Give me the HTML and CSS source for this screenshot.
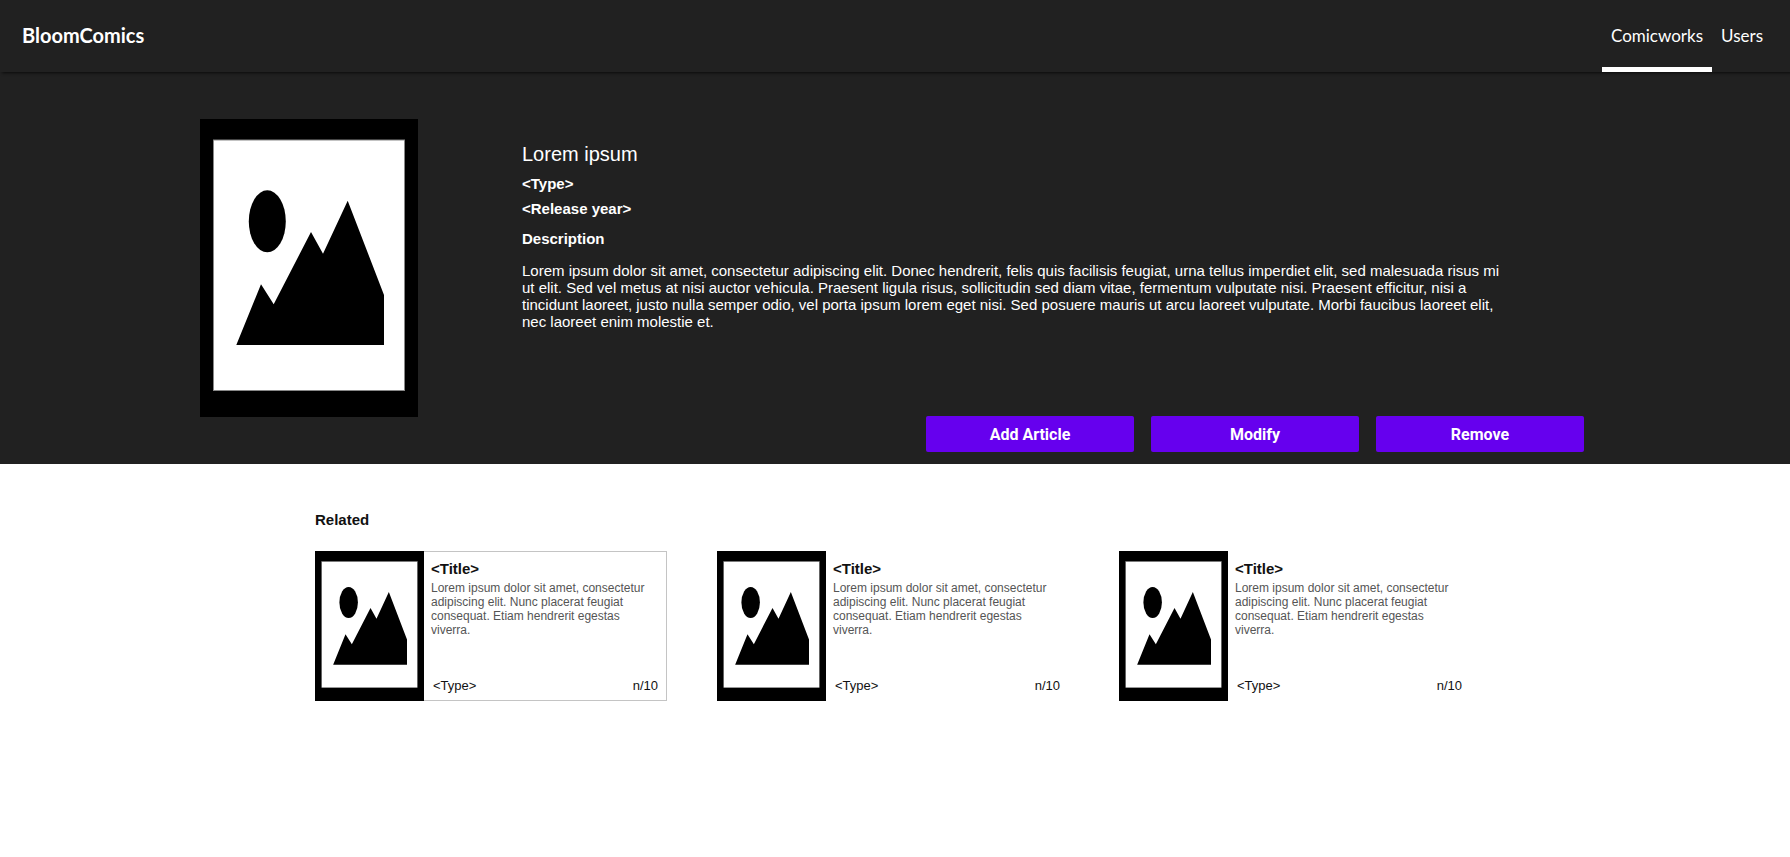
FILE: index.html
```html
<!DOCTYPE html>
<html lang="en">
<head>
<meta charset="utf-8">
<meta name="viewport" content="width=device-width, initial-scale=1">
<title>BloomComics</title>
<link rel="stylesheet" href="styles.css">
</head>
<body>
<svg class="defs" aria-hidden="true">
  <symbol id="cover" viewBox="0 0 218 298" preserveAspectRatio="none">
    <rect width="218" height="298" fill="#000"/>
    <rect x="13.5" y="21" width="191" height="250.5" fill="#fff" stroke="#888" stroke-width="1"/>
    <ellipse cx="67.3" cy="102.3" rx="18.5" ry="31"/>
    <path d="M36.3 226 61 165.3 73.7 185.3 111 113 123 134.7 147.7 81.7 184 176V226Z"/>
  </symbol>
</svg>

<header class="topbar">
  <a class="brand" href="#">BloomComics</a>
  <nav class="nav">
    <a class="nav-link active" href="#">Comicworks</a>
    <a class="nav-link" href="#">Users</a>
  </nav>
</header>

<main>
  <section class="hero">
    <svg class="hero-cover" role="img" aria-label="Cover"><use href="#cover"/></svg>
    <div class="info">
      <h1 class="title">Lorem ipsum</h1>
      <p class="meta">&lt;Type&gt;</p>
      <p class="meta">&lt;Release year&gt;</p>
      <h2 class="subtitle">Description</h2>
      <p class="description">Lorem ipsum dolor sit amet, consectetur adipiscing elit. Donec hendrerit, felis quis facilisis feugiat, urna tellus imperdiet elit, sed malesuada risus mi ut elit. Sed vel metus at nisi auctor vehicula. Praesent ligula risus, sollicitudin sed diam vitae, fermentum vulputate nisi. Praesent efficitur, nisi a tincidunt laoreet, justo nulla semper odio, vel porta ipsum lorem eget nisi. Sed posuere mauris ut arcu laoreet vulputate. Morbi faucibus laoreet elit, nec laoreet enim molestie et.</p>
      <div class="actions">
        <button class="button" type="button">Add Article</button>
        <button class="button" type="button">Modify</button>
        <button class="button" type="button">Remove</button>
      </div>
    </div>
  </section>

  <section class="related">
    <h2 class="related-heading">Related</h2>
    <div class="cards">
      <article class="card selected">
        <svg class="card-cover" role="img" aria-label="Cover"><use href="#cover"/></svg>
        <div class="card-body">
          <h3 class="card-title">&lt;Title&gt;</h3>
          <p class="card-text">Lorem ipsum dolor sit amet, consectetur adipiscing elit. Nunc placerat feugiat consequat. Etiam hendrerit egestas viverra.</p>
          <div class="card-foot"><span>&lt;Type&gt;</span><span>n/10</span></div>
        </div>
      </article>
      <article class="card">
        <svg class="card-cover" role="img" aria-label="Cover"><use href="#cover"/></svg>
        <div class="card-body">
          <h3 class="card-title">&lt;Title&gt;</h3>
          <p class="card-text">Lorem ipsum dolor sit amet, consectetur adipiscing elit. Nunc placerat feugiat consequat. Etiam hendrerit egestas viverra.</p>
          <div class="card-foot"><span>&lt;Type&gt;</span><span>n/10</span></div>
        </div>
      </article>
      <article class="card">
        <svg class="card-cover" role="img" aria-label="Cover"><use href="#cover"/></svg>
        <div class="card-body">
          <h3 class="card-title">&lt;Title&gt;</h3>
          <p class="card-text">Lorem ipsum dolor sit amet, consectetur adipiscing elit. Nunc placerat feugiat consequat. Etiam hendrerit egestas viverra.</p>
          <div class="card-foot"><span>&lt;Type&gt;</span><span>n/10</span></div>
        </div>
      </article>
    </div>
  </section>
</main>
</body>
</html>
```
FILE: styles.css
```css
* {
  box-sizing: border-box;
}

body {
  margin: 0;
  background: #fff;
  color: #111;
  font-family: "Liberation Sans", Arial, sans-serif;
}

h1, h2, h3, p {
  margin: 0;
}

.defs {
  display: none;
}

.topbar {
  position: relative;
  display: flex;
  justify-content: space-between;
  height: 72px;
  padding: 0 18px 0 22px;
  background: #212121;
  box-shadow: 2px 1px 3px rgba(0, 0, 0, 0.7);
  font-family: Lato, sans-serif;
}

.brand {
  align-self: center;
  padding-bottom: 2px;
  color: #fff;
  font-size: 20px;
  font-weight: 700;
  text-decoration: none;
}

.nav {
  display: flex;
}

.nav-link {
  display: flex;
  align-items: center;
  padding: 3px 9px 0;
  border-bottom: 5px solid transparent;
  color: #fff;
  font-size: 17px;
  text-decoration: none;
}

.nav-link.active {
  border-bottom-color: #fff;
}

.hero {
  display: flex;
  gap: 104px;
  padding: 47px 206px 12px 200px;
  background: #212121;
  color: #fff;
}

.hero-cover {
  flex: none;
  width: 218px;
  height: 298px;
}

.info {
  display: flex;
  flex: 1;
  flex-direction: column;
  min-height: 333px;
  padding-top: 23px;
}

.title {
  margin-bottom: 9px;
  font-size: 20px;
  font-weight: 400;
  line-height: 24px;
}

.meta {
  margin-bottom: 7px;
  font-size: 15px;
  font-weight: 700;
  line-height: 18px;
}

.subtitle {
  margin: 5px 0 14px;
  font-size: 15px;
  line-height: 18px;
}

.description {
  padding-right: 80px;
  font-size: 15px;
  line-height: 17px;
}

.actions {
  display: flex;
  justify-content: flex-end;
  gap: 17px;
  margin-top: auto;
}

.button {
  width: 208px;
  height: 36px;
  padding: 0;
  border: 0;
  border-radius: 2px;
  background: #6600ee;
  color: #fff;
  font: 700 16px Roboto, sans-serif;
}

.related {
  padding: 47px 315px;
}

.related-heading {
  margin-bottom: 22px;
  font-size: 15px;
  line-height: 18px;
}

.cards {
  display: grid;
  grid-template-columns: repeat(3, minmax(0, 352px));
  gap: 50px;
}

.card {
  display: flex;
  min-height: 150px;
}

.card-cover {
  flex: none;
  width: 109px;
  height: 150px;
}

.card-body {
  display: flex;
  flex: 1;
  flex-direction: column;
  padding: 8px 8px 4px 7px;
  border: 1px solid transparent;
  border-left: 0;
}

.selected .card-body {
  border-color: #c4c4c4;
}

.card-title {
  margin-bottom: 3px;
  font-size: 15px;
  line-height: 18px;
}

.card-text {
  color: #555;
  font-size: 12px;
  line-height: 14px;
}

.card-foot {
  display: flex;
  justify-content: space-between;
  margin-top: auto;
  padding-left: 2px;
  font-size: 13px;
  line-height: 20px;
}
```
